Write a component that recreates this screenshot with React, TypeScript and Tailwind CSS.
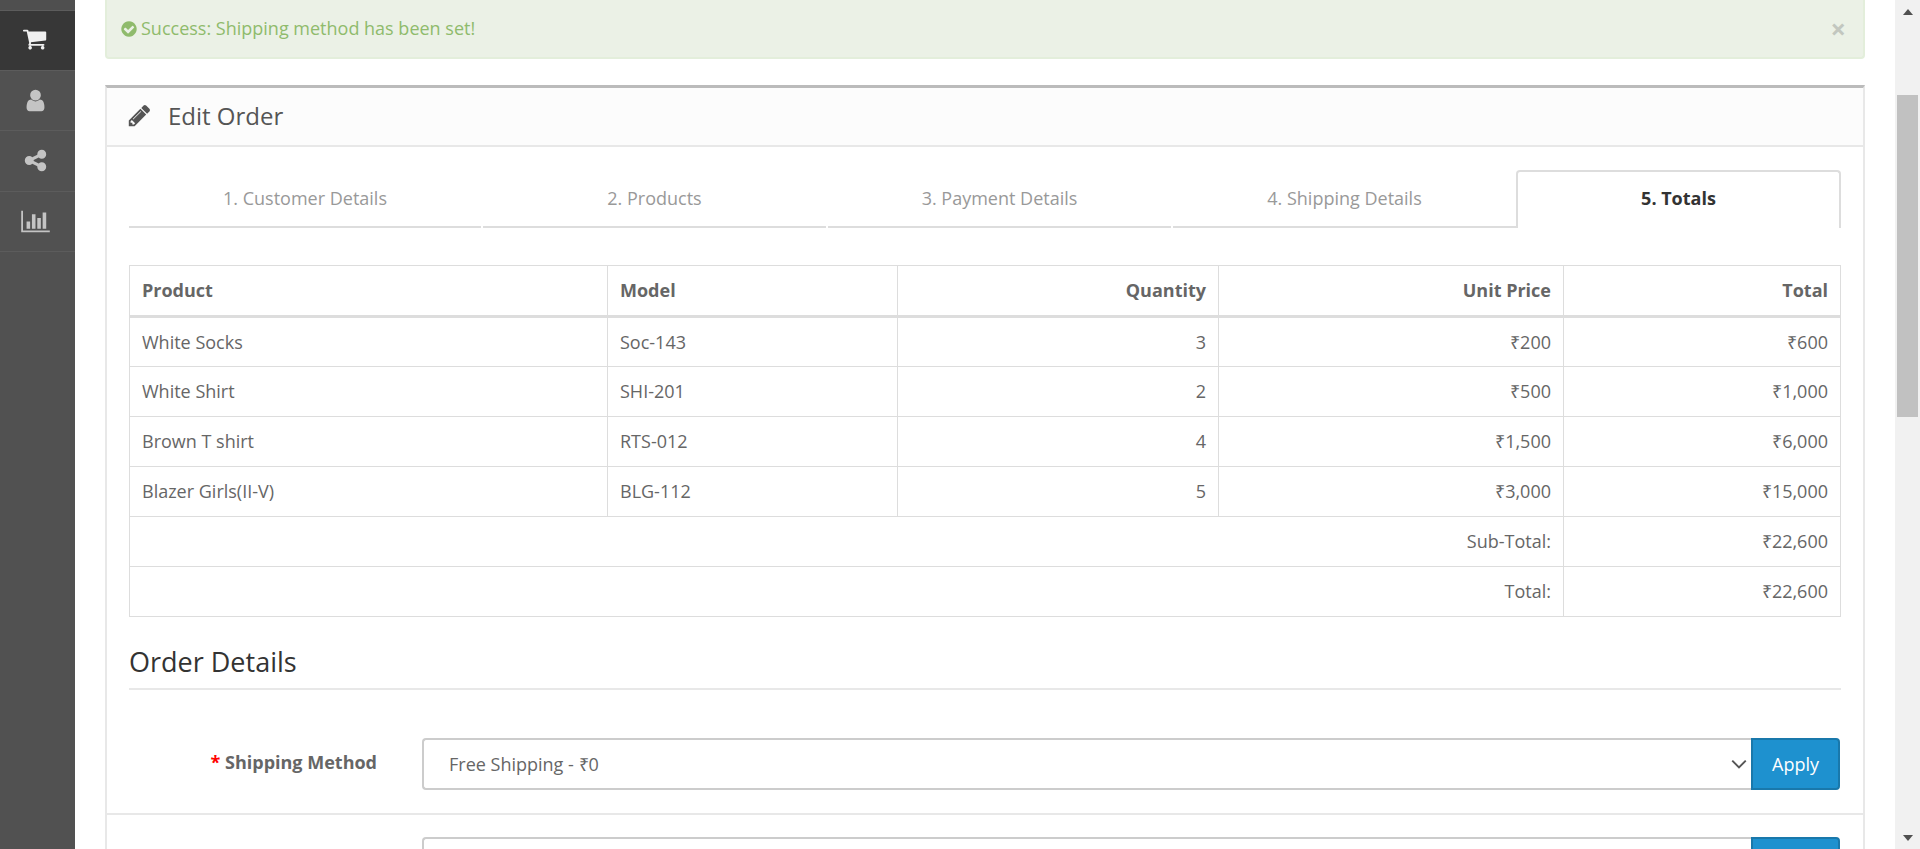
import React from "react";

const Ico = ({ d, vb = "0 0 1792 1792", className }: { d: string; vb?: string; className: string }) => (
  <svg viewBox={vb} className={className} fill="currentColor"><path d={d} /></svg>
);
const cart = "M640 1408q0 52-38 90t-90 38-90-38-38-90 38-90 90-38 90 38 38 90zm896 0q0 52-38 90t-90 38-90-38-38-90 38-90 90-38 90 38 38 90zm128-1088v512q0 24-16.5 42.5t-40.5 21.5l-1044 122q13 60 13 70 0 16-24 64h920q26 0 45 19t19 45-19 45-45 19h-1024q-26 0-45-19t-19-45q0-11 8-31.5t16-36 21.500-40 15.500-29.500l-177-823h-204q-26 0-45-19t-19-45 19-45 45-19h256q16 0 28.500 6.500t19.500 15.500 13 24.500 8 26 5.500 29.500 4.500 26h1201q26 0 45 19t19 45z";
const user = "M1536 1399q0 109-62.500 187t-150.500 78h-854q-88 0-150.500-78t-62.500-187q0-85 8.500-160.500t31.500-152 58.500-131 94-89 134.500-34.500q131 128 313 128t313-128q76 0 134.500 34.500t94 89 58.500 131 31.500 152 8.500 160.500zm-256-887q0 159-112.500 271.500t-271.500 112.500-271.500-112.500-112.500-271.500 112.500-271.500 271.500-112.500 271.500 112.500 112.500 271.500z";
const share = "M1344 1024q133 0 226.500 93.500t93.500 226.500-93.500 226.500-226.500 93.500-226.500-93.500-93.500-226.500q0-12 2-34l-360-180q-92 86-218 86-133 0-226.500-93.500t-93.500-226.500 93.500-226.500 226.500-93.500q126 0 218 86l360-180q-2-22-2-34 0-133 93.500-226.500t226.500-93.500 226.500 93.500 93.500 226.500-93.500 226.500-226.500 93.500q-126 0-218-86l-360 180q2 22 2 34t-2 34l360 180q92-86 218-86z";
const bars = "M640 896v512h-256v-512h256zm384-512v1024h-256v-1024h256zm1024 1152v128h-2048v-1536h128v1408h1920zm-640-896v768h-256v-768h256zm384-384v1152h-256v-1152h256z";
const pencil = "M491 1536l91-91-235-235-91 91v107h128v128h107zm523-928q0-22-22-22-10 0-17 7l-542 542q-7 7-7 17 0 22 22 22 10 0 17-7l542-542q7-7 7-17zm-54-192l416 416-832 832h-416v-416zm683 96q0 53-37 90l-166 166-416-416 166-165q36-38 90-38 53 0 91 38l235 234q37 39 37 91z";
const check = "M1412 734q0-28-18-46l-91-90q-19-19-45-19t-45 19l-408 407-226-226q-19-19-45-19t-45 19l-91 90q-18 18-18 46 0 27 18 45l362 362q19 19 45 19 27 0 46-19l543-543q18-18 18-45zm252 162q0 209-103 385.500t-279.500 279.500-385.500 103-385.500-103-279.500-279.500-103-385.500 103-385.500 279.500-279.500 385.500-103 385.500 103 279.500 279.500 103 385.500z";

const rows = [
  ["White Socks", "Soc-143", "3", "₹200", "₹600"],
  ["White Shirt", "SHI-201", "2", "₹500", "₹1,000"],
  ["Brown T shirt", "RTS-012", "4", "₹1,500", "₹6,000"],
  ["Blazer Girls(II-V)", "BLG-112", "5", "₹3,000", "₹15,000"],
];
const th = "border border-[#dddddd] border-b-[3px] px-3 h-[51px] font-bold text-[#666666]";
const td = "border border-[#dddddd] px-3 h-[50px] text-[#666666] font-normal";

export default function App() {
  return (
    <div className="flex h-screen overflow-hidden bg-white font-['Open_Sans',sans-serif] text-[18px] text-[#666666]">
      <aside className="w-[75px] shrink-0 bg-[#515151] text-[#c4c4c4]">
        <div className="h-[10px] bg-[#4f4f4f]" />
        <div className="flex h-[61px] items-center justify-center border-y-[1px] border-[#5c5c5c] bg-[#373737] pr-[5px] text-[#f0f0f0]">
          <Ico d={cart} className="h-[25px] w-[25px]" />
        </div>
        <div className="flex h-[60px] items-center justify-center border-b border-[#5c5c5c] pr-[5px]">
          <Ico d={user} className="h-[25px] w-[25px]" />
        </div>
        <div className="flex h-[61px] items-center justify-center border-b border-[#5c5c5c] pr-[5px] pb-[1px]">
          <Ico d={share} className="h-[25px] w-[25px]" />
        </div>
        <div className="flex h-[60px] items-center justify-center border-b border-[#5c5c5c] pr-[5px]">
          <Ico d={bars} vb="0 0 2048 1792" className="h-[25px] w-[29px]" />
        </div>
      </aside>

      <main className="flex min-w-0 flex-1 flex-col pl-[30px] pr-[30px]">
        <div className="flex h-[59px] shrink-0 items-center justify-between rounded-b-[4px] border-2 border-t-0 border-[#e3eedb] bg-[#ebf1e6] pl-[13px] pr-[17px] text-[#8fbb6c]">
          <span className="flex items-center gap-[3px]">
            <Ico d={check} className="h-[18px] w-[18px]" />
            Success: Shipping method has been set!
          </span>
          <span className="text-[27px] font-bold leading-none text-[#c2c7bf]">×</span>
        </div>

        <section className="mt-[26px] flex-1 border-x-2 border-t-[3px] border-x-[#e8e8e8] border-t-[#bbbbbb]">
          <header className="flex h-[59px] items-center gap-[16px] border-b-2 border-[#e8e8e8] bg-[#fcfcfc] pb-[2px] pl-[20px] text-[24px] text-[#555555]">
            <Ico d={pencil} className="h-[25px] w-[25px]" />
            <span>Edit Order</span>
          </header>
          <div className="px-[22px] pt-[23px]">
            <nav className="flex h-[58px] text-[#999999]">
              <div className="flex w-[352px] items-center justify-center border-b-2 border-[#dddddd]">1. Customer Details</div>
              <div className="ml-[2px] flex w-[343px] items-center justify-center border-b-2 border-[#dddddd]">2. Products</div>
              <div className="ml-[2px] flex w-[343px] items-center justify-center border-b-2 border-[#dddddd]">3. Payment Details</div>
              <div className="ml-[2px] flex w-[343px] items-center justify-center border-b-2 border-[#dddddd]">4. Shipping Details</div>
              <div className="flex flex-1 items-center justify-center rounded-t-[4px] border-2 border-b-0 border-[#dddddd] pb-[4px] font-bold text-[#333333]">5. Totals</div>
            </nav>

            <table className="mt-[37px] w-[1711px] table-fixed border-collapse">
              <colgroup>
                <col className="w-[478px]" />
                <col className="w-[290px]" />
                <col className="w-[321px]" />
                <col className="w-[345px]" />
                <col className="w-[277px]" />
              </colgroup>
              <thead>
                <tr>
                  <th className={`${th} text-left`}>Product</th>
                  <th className={`${th} text-left`}>Model</th>
                  <th className={`${th} text-right`}>Quantity</th>
                  <th className={`${th} text-right`}>Unit Price</th>
                  <th className={`${th} text-right`}>Total</th>
                </tr>
              </thead>
              <tbody>
                {rows.map((r) => (
                  <tr key={r[0]}>
                    <td className={`${td} text-left`}>{r[0]}</td>
                    <td className={`${td} text-left`}>{r[1]}</td>
                    <td className={`${td} text-right`}>{r[2]}</td>
                    <td className={`${td} text-right`}>{r[3]}</td>
                    <td className={`${td} text-right`}>{r[4]}</td>
                  </tr>
                ))}
                <tr>
                  <td colSpan={4} className={`${td} text-right`}>Sub-Total:</td>
                  <td className={`${td} text-right`}>₹22,600</td>
                </tr>
                <tr>
                  <td colSpan={4} className={`${td} text-right`}>Total:</td>
                  <td className={`${td} text-right`}>₹22,600</td>
                </tr>
              </tbody>
            </table>

            <h3 className="mt-[27px] h-[46px] border-b-2 border-[#e8e8e8] text-[27px] leading-[35px] text-[#333333]">Order Details</h3>
          </div>

          <div className="mt-[48px] flex h-[77px] border-b-2 border-[#e8e8e8] pl-[22px] pr-[23px]">
            <label className="w-[248px] pt-[11px] text-right font-bold text-[#666666]"><span className="text-[#ff0000]">*</span> Shipping Method</label>
            <div className="ml-[45px] flex h-[52px] flex-1">
              <div className="flex flex-1 items-center justify-between rounded-l-[4px] border-2 border-r-0 border-[#cccccc] pl-[25px] pr-[3px]">
                <span>Free Shipping - ₹0</span>
                <svg viewBox="0 0 16 16" className="h-[18px] w-[18px] text-[#555555]" fill="none" stroke="currentColor" strokeWidth="1.7"><path d="M2 5l6 6 6-6" /></svg>
              </div>
              <button className="w-[89px] rounded-r-[4px] border-2 border-[#1978ab] bg-[#1e91cf] text-white">Apply</button>
            </div>
          </div>
          <div className="mt-[22px] flex h-[52px] pl-[22px] pr-[23px]">
            <div className="ml-[293px] flex flex-1">
              <div className="flex-1 rounded-l-[4px] border-2 border-r-0 border-[#cccccc]" />
              <div className="w-[89px] rounded-r-[4px] border-2 border-[#1978ab] bg-[#1e91cf]" />
            </div>
          </div>
        </section>
      </main>

      <div className="flex w-[25px] shrink-0 flex-col items-center bg-[#f1f1f1] pt-[9px]">
        <div className="h-0 w-0 border-x-[5.5px] border-b-[6px] border-x-transparent border-b-[#505050]" />
        <div className="mt-[80px] h-[322px] w-[21px] bg-[#c1c1c1]" />
        <div className="mt-auto mb-[8px] h-0 w-0 border-x-[5.5px] border-t-[6px] border-x-transparent border-t-[#505050]" />
      </div>
    </div>
  );
}
